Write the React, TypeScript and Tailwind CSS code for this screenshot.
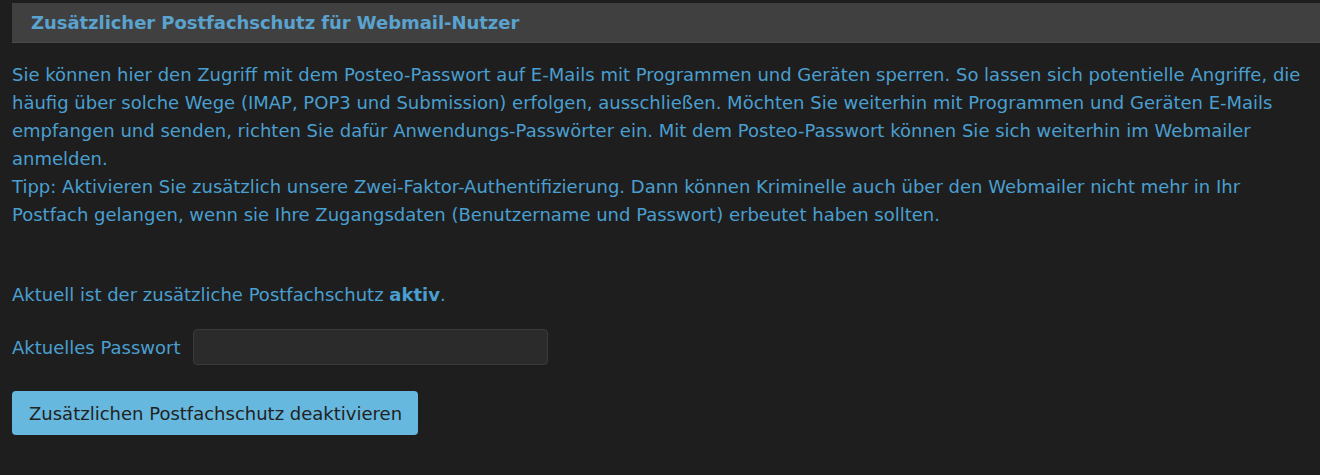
export default function App() {
  return (
    <div className="min-h-[475px] bg-[#1e1e1e] pt-[3px] font-['DejaVu_Sans',sans-serif] text-[18px] text-[#4a9fd0]">
      <div className="ml-3 h-[40px] border-b border-[#4a4a4a] bg-[#404040] pl-[19px] flex items-center">
        <h2 className="font-bold text-[18px] tracking-[-0.05px] text-[#5aa3cf]">Zusätzlicher Postfachschutz für Webmail-Nutzer</h2>
      </div>
      <div className="px-3">
        <p className="mt-[18px] leading-[28px]">
          Sie können hier den Zugriff mit dem Posteo-Passwort auf E-Mails mit Programmen und Geräten sperren. So lassen sich potentielle Angriffe, die häufig über solche Wege (IMAP, POP3 und Submission) erfolgen, ausschließen. Möchten Sie weiterhin mit Programmen und Geräten E-Mails empfangen und senden, richten Sie dafür Anwendungs-Passwörter ein. Mit dem Posteo-Passwort können Sie sich weiterhin im Webmailer anmelden.
          <br />
          Tipp: Aktivieren Sie zusätzlich unsere Zwei-Faktor-Authentifizierung. Dann können Kriminelle auch über den Webmailer nicht mehr in Ihr Postfach gelangen, wenn sie Ihre Zugangsdaten (Benutzername und Passwort) erbeutet haben sollten.
        </p>
        <p className="mt-[52px] leading-[28px]">
          Aktuell ist der zusätzliche Postfachschutz <strong className="font-bold">aktiv</strong>.
        </p>
        <div className="mt-[20px] flex items-center gap-[13px]">
          <label>Aktuelles Passwort</label>
          <input type="password" className="h-[36px] w-[355px] rounded-[4px] border border-[#3a3a3a] bg-[#2b2b2b] outline-none" />
        </div>
        <button className="mt-[26px] h-[44px] rounded-[4px] bg-[#66b8de] pl-[17px] pr-[16px] text-[18px] text-[#222]">
          Zusätzlichen Postfachschutz deaktivieren
        </button>
      </div>
    </div>
  );
}
